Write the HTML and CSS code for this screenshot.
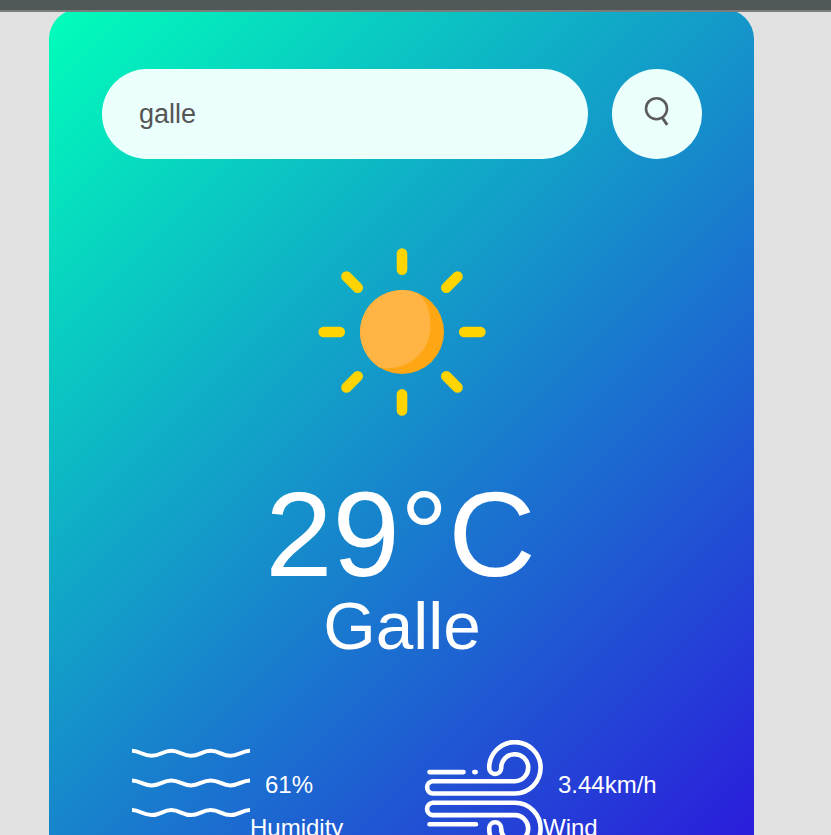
FILE: index.html
```html
<!DOCTYPE html>
<html lang="en">
<head>
<meta charset="utf-8">
<title>Weather</title>
<link rel="stylesheet" href="styles.css">
</head>
<body>
<header class="topbar"></header>
<main class="card">
  <form class="search">
    <input class="search-input" type="text" value="galle" aria-label="City" spellcheck="false">
    <button class="search-button" type="button" aria-label="Search">
      <svg width="26" height="32" viewBox="0 0 26 32" fill="none" stroke="#5c5c5c">
        <circle cx="12.5" cy="12.7" r="10.5" stroke-width="2.6"/>
        <path d="M17.8 21L23.2 28.8" stroke-width="3"/>
      </svg>
    </button>
  </form>
  <section class="weather">
    <svg class="sun" viewBox="-90 -90 180 180">
      <g stroke="#ffd400" stroke-width="10.6" stroke-linecap="round">
        <path d="M0-78.4V-62.2M0 78.4V62.2M-78.4 0H-62.2M78.4 0H62.2M-55.5-55.5L-44.3-44.3M55.5-55.5L44.3-44.3M-55.5 55.5L-44.3 44.3M55.5 55.5L44.3 44.3"/>
      </g>
      <circle r="42" fill="#ffa614"/>
      <path d="M16-38.83A42 42 0 0 0-23 35.14A42 42 0 0 0 28.4-7C28.4-20 25-31 16-38.83Z" fill="#ffb444"/>
    </svg>
    <h1 class="temp">29°C</h1>
    <h2 class="city">Galle</h2>
  </section>
  <section class="details">
    <div class="detail">
      <svg class="icon" width="118" height="118" viewBox="0 0 118 118" fill="none" stroke="#fff" stroke-width="4">
        <path id="wave" d="M0 10.8C8 10.8 11 15.8 19.7 15.8S31 10.8 39.3 10.8S50.5 15.8 59 15.8S70 10.8 78.7 10.8S90 15.8 98.3 15.8S110 10.8 118 10.8"/>
        <use href="#wave" y="29.6"/>
        <use href="#wave" y="59.3"/>
        <use href="#wave" y="89"/>
      </svg>
      <div>
        <p class="value">61%</p>
        <p class="label">Humidity</p>
      </div>
    </div>
    <div class="detail">
      <svg class="icon" width="119" height="119" viewBox="0 0 119 119" fill="none" stroke="#fff" stroke-width="4.6" stroke-linecap="round">
        <path d="M5.5 32.1H39.5M50.3 32.1H51.7"/>
        <path d="M91 41.2H8.5A6.2 6.2 0 0 0 8.5 53.5H91A25.7 25.7 0 1 0 65.2 28A6 6 0 0 0 77.2 28A13.5 13.5 0 1 1 91 41.2Z"/>
        <path d="M5.5 84.2H52M91 75.1H8.5A6.2 6.2 0 0 1 8.5 62.8H91A25.7 25.7 0 1 1 65.2 88.3A6 6 0 0 1 77.2 88.3A13.5 13.5 0 1 0 91 75.1Z"/>
      </svg>
      <div>
        <p class="value">3.44km/h</p>
        <p class="label">Wind</p>
      </div>
    </div>
  </section>
</main>
</body>
</html>
```
FILE: styles.css
```css
* {
  box-sizing: border-box;
  margin: 0;
  padding: 0;
  font-family: "Liberation Sans", Arial, sans-serif;
}

body {
  height: 100vh;
  overflow: hidden;
  background: #e1e1e1;
}

.topbar {
  position: relative;
  z-index: 1;
  height: 12px;
  background: #505957;
  border-bottom: 2px solid #7c7c7c;
}

.card {
  width: 705px;
  height: 1020px;
  margin: -3px 0 0 49px;
  padding: 60px 52px 60px 53px;
  border-radius: 30px;
  background: linear-gradient(135deg, #00ffba, #3000e0);
  color: #fff;
}

.search {
  display: flex;
  justify-content: space-between;
}

.search-input {
  width: 486px;
  height: 90px;
  padding: 0 37px;
  border: 0;
  border-radius: 45px;
  background: #ebfffc;
  color: #555;
  font-size: 27px;
}

.search-button {
  display: flex;
  justify-content: center;
  width: 90px;
  height: 90px;
  padding-top: 27px;
  border: 0;
  border-radius: 50%;
  background: #ebfffc;
}

.weather {
  display: flex;
  flex-direction: column;
  align-items: center;
  padding-top: 83px;
}

.sun {
  width: 180px;
  height: 180px;
}

.temp {
  margin-top: 45px;
  padding-right: 3px;
  font-size: 121px;
  font-weight: 500;
  line-height: 134px;
}

.city {
  margin-top: -13px;
  font-size: 67.5px;
  font-weight: 500;
  line-height: 76px;
}

.details {
  display: flex;
  margin-top: 76px;
  padding-left: 30px;
}

.detail {
  display: flex;
  flex: none;
  width: 292px;
  font-size: 24px;
  line-height: 27px;
  white-space: nowrap;
}

.icon {
  flex: none;
}

.value {
  margin: 31px 0 16px 15px;
}
```
